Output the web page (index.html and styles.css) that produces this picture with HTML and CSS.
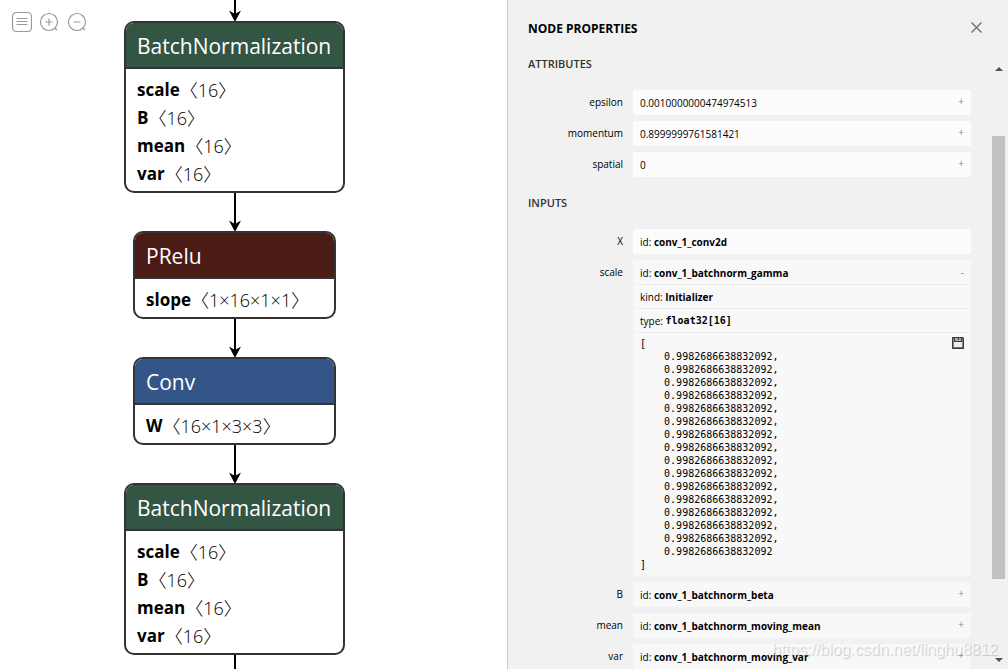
FILE: index.html
```html
<!DOCTYPE html>
<html lang="en">
<head>
<meta charset="utf-8">
<title>Model graph</title>
<link rel="stylesheet" href="styles.css">
</head>
<body>
<main class="graph">
  <nav class="toolbar">
    <button class="tool" aria-label="Menu"><svg width="22" height="22" viewBox="0 0 22 22"><rect x="2.500" y="2.500" width="19" height="19" rx="4"/><path d="M6.500 8.500h11M6.500 11.500h11M6.500 14.500h11"/></svg></button>
    <button class="tool" aria-label="Zoom in"><svg width="22" height="22" viewBox="0 0 22 22"><circle cx="11" cy="12" r="8.500"/><path d="M7.500 12h7M11 8.500v7M17 18l2 2"/></svg></button>
    <button class="tool" aria-label="Zoom out"><svg width="22" height="22" viewBox="0 0 22 22"><circle cx="11" cy="12" r="8.500"/><path d="M7.500 12h7M17 18l2 2"/></svg></button>
  </nav>
  <div class="flow">
    <svg class="edge first" viewBox="0 0 14 38"><path d="M7 0V34"/><path class="head" d="M7 39L1 27.500L7 31L13 27.500Z"/></svg>
    <section class="node wide">
      <h2 class="op norm">BatchNormalization</h2>
      <ul class="params">
        <li><b>scale</b><span>〈16〉</span></li>
        <li><b>B</b><span>〈16〉</span></li>
        <li><b>mean</b><span>〈16〉</span></li>
        <li><b>var</b><span>〈16〉</span></li>
      </ul>
    </section>
    <svg class="edge" viewBox="0 0 14 38"><path d="M7 0V34"/><path class="head" d="M7 39L1 27.500L7 31L13 27.500Z"/></svg>
    <section class="node">
      <h2 class="op activation">PRelu</h2>
      <ul class="params"><li><b>slope</b><span>〈1×16×1×1〉</span></li></ul>
    </section>
    <svg class="edge" viewBox="0 0 14 38"><path d="M7 0V34"/><path class="head" d="M7 39L1 27.500L7 31L13 27.500Z"/></svg>
    <section class="node">
      <h2 class="op layer">Conv</h2>
      <ul class="params"><li><b>W</b><span>〈16×1×3×3〉</span></li></ul>
    </section>
    <svg class="edge" viewBox="0 0 14 38"><path d="M7 0V34"/><path class="head" d="M7 39L1 27.500L7 31L13 27.500Z"/></svg>
    <section class="node wide">
      <h2 class="op norm">BatchNormalization</h2>
      <ul class="params">
        <li><b>scale</b><span>〈16〉</span></li>
        <li><b>B</b><span>〈16〉</span></li>
        <li><b>mean</b><span>〈16〉</span></li>
        <li><b>var</b><span>〈16〉</span></li>
      </ul>
    </section>
    <svg class="edge" viewBox="0 0 14 38"><path d="M7 0V34"/></svg>
  </div>
</main>
<aside class="sidebar">
  <header class="sidebar-head">
    <h1>NODE PROPERTIES</h1>
    <button class="close" aria-label="Close"><svg width="11" height="11" viewBox="0 0 11 11"><path d="M.5 .5L10.500 10.500M10.500 .5L.5 10.500"/></svg></button>
  </header>
  <div class="sidebar-body">
    <div class="content">
      <h3>ATTRIBUTES</h3>
      <div class="row"><span class="name">epsilon</span><div class="value"><div class="line">0.0010000000474974513<button class="toggle">+</button></div></div></div>
      <div class="row"><span class="name">momentum</span><div class="value"><div class="line">0.8999999761581421<button class="toggle">+</button></div></div></div>
      <div class="row"><span class="name">spatial</span><div class="value"><div class="line">0<button class="toggle">+</button></div></div></div>
      <h3>INPUTS</h3>
      <div class="row"><span class="name">X</span><div class="value"><div class="line">id:&nbsp;<b>conv_1_conv2d</b></div></div></div>
      <div class="row"><span class="name">scale</span><div class="value tensor">
        <div class="line open">id:&nbsp;<b>conv_1_batchnorm_gamma</b><button class="toggle">-</button></div>
        <div class="line sub">kind:&nbsp;<b>Initializer</b></div>
        <div class="line sub">type:&nbsp;<code>float32[16]</code></div>
        <div class="data">
<pre>[
    0.9982686638832092,
    0.9982686638832092,
    0.9982686638832092,
    0.9982686638832092,
    0.9982686638832092,
    0.9982686638832092,
    0.9982686638832092,
    0.9982686638832092,
    0.9982686638832092,
    0.9982686638832092,
    0.9982686638832092,
    0.9982686638832092,
    0.9982686638832092,
    0.9982686638832092,
    0.9982686638832092,
    0.9982686638832092
]</pre>
          <button class="save" aria-label="Save tensor"><svg width="12" height="12" viewBox="0 0 12 12"><path fill="#3b3b42" d="M0 0H11L12 1V12H0Z"/><path fill="#85858b" d="M1 1h1v9H1zM10 1l1 1v8h-1z"/><path fill="#a9a9ae" d="M3 1h6v3H3z"/><path fill="#3b3b42" d="M6 1h1v2H6z"/><path fill="#eee" d="M2 5h8v5H2z"/><path fill="#e2307a" d="M1 10h10v1H1z"/></svg></button>
        </div>
      </div></div>
      <div class="row"><span class="name">B</span><div class="value tensor"><div class="line">id:&nbsp;<b>conv_1_batchnorm_beta</b><button class="toggle">+</button></div></div></div>
      <div class="row"><span class="name">mean</span><div class="value tensor"><div class="line">id:&nbsp;<b>conv_1_batchnorm_moving_mean</b><button class="toggle">+</button></div></div></div>
      <div class="row"><span class="name">var</span><div class="value tensor"><div class="line">id:&nbsp;<b>conv_1_batchnorm_moving_var</b><button class="toggle">+</button></div></div></div>
    </div>
    <div class="scrollbar">
      <svg width="8" height="4" viewBox="0 0 8 4"><path d="M0 4L4 0L8 4Z"/></svg>
      <div class="track"><div class="thumb"></div></div>
      <svg width="8" height="4" viewBox="0 0 8 4"><path d="M0 0L4 4L8 0Z"/></svg>
    </div>
  </div>
</aside>
<div class="watermark">https://blog.csdn.net/linghu8812</div>
</body>
</html>
```

FILE: styles.css
```css
* { box-sizing: border-box; }
body {
  margin: 0;
  height: 100vh;
  display: flex;
  overflow: hidden;
  position: relative;
  background: #fff;
  color: #000;
  font-family: "Open Sans", "Noto Sans", "Noto Sans CJK SC", sans-serif;
}
button { border: 0; padding: 0; background: none; font: inherit; color: inherit; }
h1, h2, h3, ul, pre { margin: 0; padding: 0; }
ul { list-style: none; }
svg { display: block; }

.graph { flex: 1; position: relative; overflow: hidden; }
.toolbar { position: absolute; left: 10px; top: 10px; display: flex; gap: 6px; }
.tool svg { fill: none; stroke: #999; stroke-width: 1.2; }
.flow { display: flex; flex-direction: column; align-items: center; width: 221px; margin-left: 124px; }
.edge { width: 14px; height: 38px; flex: none; fill: none; stroke: #000; stroke-width: 2; overflow: visible; }
.edge.first { margin-top: -17px; }
.edge .head { fill: #000; stroke: none; }
.node { width: 203px; border: 2px solid #333; border-radius: 10px; overflow: hidden; flex: none; background: #fff; }
.node.wide { width: 221px; }
.op { height: 46px; padding-left: 11px; border-bottom: 2px solid #333; color: #fff; font-size: 21px; font-weight: 400; line-height: 46px; }
.norm { background: #335544; }
.activation { background: #4b1b16; }
.layer { background: #335588; }
.params { padding: 7px 11px 3px; font-size: 17px; line-height: 28px; }
.params li { display: flex; white-space: nowrap; }
.params span { font-size: 18px; font-weight: 300; }

.sidebar { width: 501px; flex: none; display: flex; flex-direction: column; background: #f1f1f1; border-left: 1px solid #ccc; }
.sidebar-head { height: 56px; flex: none; padding: 19px 26px 0 20px; display: flex; justify-content: space-between; align-items: flex-start; }
h1 { font-size: 12px; line-height: 20px; font-weight: 700; }
.close { padding: 3px 0; }
.close svg { fill: none; stroke: #777; stroke-width: 1.5; }
.sidebar-body { flex: 1; min-height: 0; display: flex; }
.content { flex: 1; padding: 0 20px; overflow: hidden; font-size: 10px; }
h3 { margin: 18px 0; font-size: 11px; line-height: 16px; font-weight: 600; color: #333; }
h3:first-child { margin-top: 0; }
.row { display: flex; gap: 10px; margin-bottom: 6px; }
.name { width: 95px; flex: none; text-align: right; font-size: 10px; line-height: 24px; }
.value { flex: 1; background: #fcfcfc; border-radius: 2px; }
.value.tensor { background: #f8f8f8; }
.line { height: 25px; padding: 0 7px; display: flex; align-items: center; }
.line.open { height: 24px; padding-top: 1px; }
.line.sub { height: 24px; margin: 0 1px; padding: 0 6px; border-top: 1px solid #ededed; }
.toggle { margin-left: auto; line-height: 22px; align-self: flex-start; color: #888; }
code, pre { font-family: "DejaVu Sans Mono", monospace; font-size: 10px; }
code { font-weight: 700; }
.data { margin: 0 1px; padding: 4px 6px 5px; display: flex; justify-content: space-between; align-items: flex-start; border-top: 1px solid #ededed; }
pre { line-height: 13px; }
.scrollbar { width: 17px; padding: 11px 3px 7px 1px; display: flex; flex-direction: column; align-items: center; gap: 6px; }
.scrollbar svg { fill: #505050; flex: none; }
.track { flex: 1; width: 13px; display: flex; flex-direction: column; padding: 59px 0 73px; }
.thumb { flex: 1; background: #c1c1c1; }
.watermark { position: absolute; right: 10px; bottom: 9px; font: 16px/20px "Liberation Sans", sans-serif; color: rgba(255, 255, 255, .7); text-shadow: 1px 1px 1px rgba(0, 0, 0, .2); }
```
